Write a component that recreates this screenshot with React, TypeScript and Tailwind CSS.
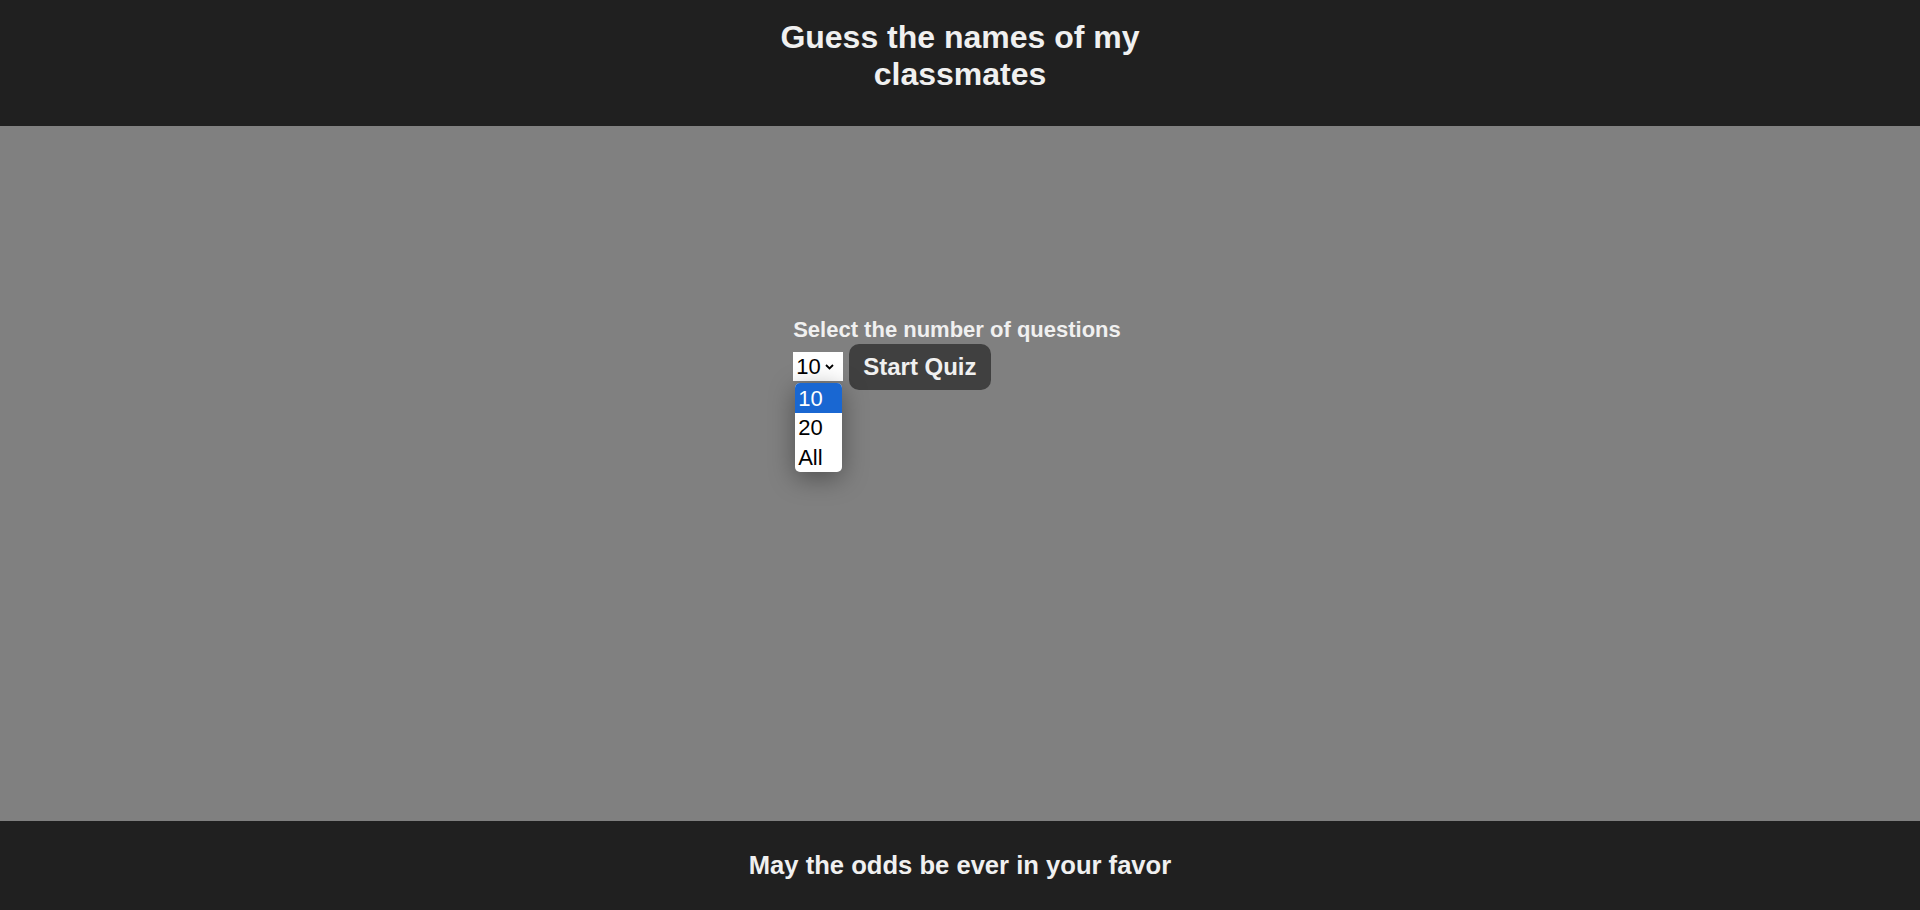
import { useState } from "react";

const options = ["10", "20", "All"];

export default function App() {
  const [count, setCount] = useState("10");
  const [open, setOpen] = useState(true);

  return (
    <div className="min-h-screen flex flex-col bg-[#808080] font-['Liberation_Sans',Arial,sans-serif] text-[#f0f0f0]">
      <header className="h-[126px] shrink-0 bg-[#202020] pt-[19px]">
        <h1 className="mx-auto w-[400px] text-center text-[32px] font-bold leading-[37px]">
          Guess the names of my classmates
        </h1>
      </header>

      <main className="flex-1 flex justify-center pt-[191px]">
        <div className="flex flex-col items-start mr-[6px]">
          <label className="text-[22px] font-bold leading-[25px]">
            Select the number of questions
          </label>
          <div className="mt-[2px] flex items-center gap-[6px]">
            <div className="relative">
              <button
                type="button"
                onClick={() => setOpen(!open)}
                className="flex h-[29px] w-[50px] items-center bg-white pl-[3px] text-[22px] leading-none text-black"
              >
                <span>{count}</span>
                <svg
                  className="ml-[4px] mt-[1px]"
                  width="9"
                  height="6"
                  viewBox="0 0 9 6"
                  fill="none"
                  stroke="#000"
                  strokeWidth="1.8"
                >
                  <path d="M1 1l3.5 3.5L8 1" />
                </svg>
              </button>
              {open && (
                <ul className="absolute left-[2px] top-[31px] z-10 w-[47px] overflow-hidden rounded-[5px] bg-white text-[22px] text-black shadow-[0_6px_26px_rgba(0,0,0,0.38)]">
                  {options.map((opt) => (
                    <li
                      key={opt}
                      onClick={() => {
                        setCount(opt);
                        setOpen(false);
                      }}
                      className={
                        opt === count
                          ? "flex h-[29.7px] items-center bg-[#1967d2] pl-[3px] text-white"
                          : "flex h-[29.7px] items-center pl-[3px]"
                      }
                    >
                      {opt}
                    </li>
                  ))}
                </ul>
              )}
            </div>
            <button
              type="button"
              className="rounded-[10px] bg-[#404040] px-[14px] py-[9px] text-[24px] font-bold leading-[27.6px] text-[#f0f0f0]"
            >
              Start Quiz
            </button>
          </div>
        </div>
      </main>

      <footer className="h-[89px] shrink-0 bg-[#202020] flex items-center justify-center">
        <p className="text-[25.6px] font-bold leading-[29.4px]">
          May the odds be ever in your favor
        </p>
      </footer>
    </div>
  );
}
